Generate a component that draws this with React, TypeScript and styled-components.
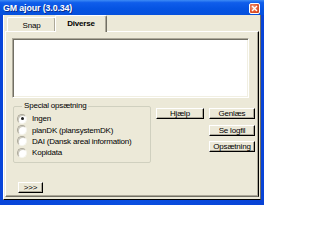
import React from 'react';
import styled, { createGlobalStyle, css } from 'styled-components';

const face = '#ECE9D8';
const shadow = '#ACA899';
const darkShadow = '#716F64';

const GlobalStyle = createGlobalStyle`
  html, body {
    margin: 0;
    padding: 0;
    background: #ffffff;
  }
  * {
    box-sizing: border-box;
  }
  body {
    font-family: 'Liberation Sans', Arial, sans-serif;
    font-size: 8px;
    letter-spacing: -0.2px;
    color: #000;
  }
`;

const Window = styled.div`
  width: 264px;
  height: 205px;
  display: flex;
  flex-direction: column;
  background: linear-gradient(90deg, #0845D9 0%, #0A4FE0 50%, #0843D6 100%);
  padding: 0 3px 5px 3px;
`;

const TitleBar = styled.div`
  height: 15px;
  margin: 0 -3px;
  padding: 1px 4px 0 3px;
  display: flex;
  align-items: center;
  justify-content: space-between;
  background: linear-gradient(180deg, #3D8BF5 0%, #0F5DEB 18%, #0553E2 60%, #0650DC 100%);
`;

const Title = styled.span`
  color: #fff;
  font-weight: bold;
  font-size: 8.8px;
  letter-spacing: -0.1px;
  white-space: nowrap;
  text-shadow: 1px 1px 0 #0A2D8C;
`;

const CloseButton = styled.div`
  width: 11px;
  height: 11px;
  border: 1px solid #fff;
  border-radius: 2px;
  background: radial-gradient(circle at 35% 35%, #F19A7A 0%, #E2552E 55%, #C8401D 100%);
  display: flex;
  align-items: center;
  justify-content: center;
`;

const Client = styled.div`
  flex: 1;
  display: flex;
  flex-direction: column;
  background: ${face};
  border-left: 1px solid #fff;
  border-right: 1px solid ${darkShadow};
  border-bottom: 1px solid #000;
  padding: 0 1px 2px 1px;
`;

const TabStrip = styled.div`
  height: 16px;
  display: flex;
  align-items: flex-end;
  padding-left: 2px;
  position: relative;
  z-index: 1;
`;

const Tab = styled.div<{ $active?: boolean }>`
  width: 49px;
  height: 14px;
  display: flex;
  align-items: center;
  justify-content: center;
  background: ${face};
  border-top: 1px solid #fff;
  border-left: 1px solid #fff;
  border-right: 1px solid ${darkShadow};
  box-shadow: inset -1px 0 0 ${shadow};
  border-radius: 2px 2px 0 0;
  padding-top: 1px;
  ${({ $active }) =>
    $active &&
    css`
      width: 52px;
      height: 17px;
      margin-left: -1px;
      margin-bottom: -1px;
      font-weight: bold;
      padding-top: 0;
      padding-bottom: 1px;
    `}
`;

const Panel = styled.div`
  flex: 1;
  display: flex;
  flex-direction: column;
  background: ${face};
  border: 1px solid;
  border-color: #fff #000 ${darkShadow} #fff;
  box-shadow: inset -1px -1px 0 ${shadow};
  padding: 6px 0 0 6px;
`;

const TextBox = styled.div`
  width: 237px;
  height: 60px;
  background: #fff;
  border: 1px solid;
  border-color: ${shadow} #fff #fff ${shadow};
  box-shadow: inset 1px 1px 0 ${darkShadow}, inset -1px -1px 0 #F1EFE2;
`;

const Row = styled.div`
  display: flex;
  align-items: flex-start;
  margin-top: 3px;
`;

const GroupBox = styled.fieldset`
  width: 138px;
  height: 62px;
  margin: 0 0 0 1px;
  padding: 0 0 0 3px;
  border: 1px solid #D0D0BF;
  border-radius: 2px;
  min-inline-size: 0;
`;

const Legend = styled.legend`
  margin-left: 5px;
  padding: 0 2px;
  line-height: 10px;
  color: #000;
`;

const RadioList = styled.div`
  display: flex;
  flex-direction: column;
  padding-top: 2px;
`;

const RadioRow = styled.label`
  height: 11.4px;
  display: flex;
  align-items: center;
  gap: 5px;
  white-space: nowrap;
`;

const RadioCircle = styled.span<{ $checked?: boolean }>`
  width: 10px;
  height: 10px;
  border-radius: 50%;
  flex: none;
  background: #fff;
  border: 1px solid;
  border-color: ${shadow} #F6F5EE #F6F5EE ${shadow};
  box-shadow: inset 1px 1px 0 #C9C7BA;
  display: flex;
  align-items: center;
  justify-content: center;
  &::after {
    content: '';
    width: 3px;
    height: 3px;
    border-radius: 50%;
    background: ${({ $checked }) => ($checked ? '#1E1E1E' : 'transparent')};
  }
`;

const ButtonGrid = styled.div`
  display: grid;
  grid-template-columns: 48px 46px;
  grid-auto-rows: 11px;
  column-gap: 5px;
  row-gap: 5.5px;
  margin: 7px 0 0 5px;
`;

const Button = styled.button<{ $col?: number; $row?: number; $width?: number }>`
  grid-column: ${({ $col }) => $col ?? 'auto'};
  grid-row: ${({ $row }) => $row ?? 'auto'};
  width: ${({ $width }) => ($width ? `${$width}px` : 'auto')};
  height: 11px;
  margin: 0;
  padding: 0;
  font-family: inherit;
  font-size: 8px;
  letter-spacing: -0.2px;
  line-height: 9px;
  color: #000;
  background: ${face};
  border: 1px solid;
  border-color: #fff #000 #000 #fff;
  box-shadow: inset -1px -1px 0 ${shadow};
  display: flex;
  align-items: center;
  justify-content: center;
`;

const Footer = styled.div`
  margin: 19px 0 0 6px;
`;

const options = [
  { label: 'Ingen', checked: true },
  { label: 'planDK (plansystemDK)' },
  { label: 'DAI (Dansk areal information)' },
  { label: 'Kopidata' },
];

export default function App() {
  return (
    <>
      <GlobalStyle />
      <Window>
        <TitleBar>
          <Title>GM ajour (3.0.34)</Title>
          <CloseButton>
            <svg width="7" height="7" viewBox="0 0 7 7">
              <path d="M1 1 L6 6 M6 1 L1 6" stroke="#fff" strokeWidth="1.4" />
            </svg>
          </CloseButton>
        </TitleBar>
        <Client>
          <TabStrip>
            <Tab>Snap</Tab>
            <Tab $active>Diverse</Tab>
          </TabStrip>
          <Panel>
            <TextBox />
            <Row>
              <GroupBox>
                <Legend>Special opsætning</Legend>
                <RadioList>
                  {options.map((o) => (
                    <RadioRow key={o.label}>
                      <RadioCircle $checked={o.checked} />
                      {o.label}
                    </RadioRow>
                  ))}
                </RadioList>
              </GroupBox>
              <ButtonGrid>
                <Button $col={1} $row={1}>Hjælp</Button>
                <Button $col={2} $row={1}>Genlæs</Button>
                <Button $col={2} $row={2}>Se logfil</Button>
                <Button $col={2} $row={3}>Opsætning</Button>
              </ButtonGrid>
            </Row>
            <Footer>
              <Button $width={25}>&gt;&gt;&gt;</Button>
            </Footer>
          </Panel>
        </Client>
      </Window>
    </>
  );
}
